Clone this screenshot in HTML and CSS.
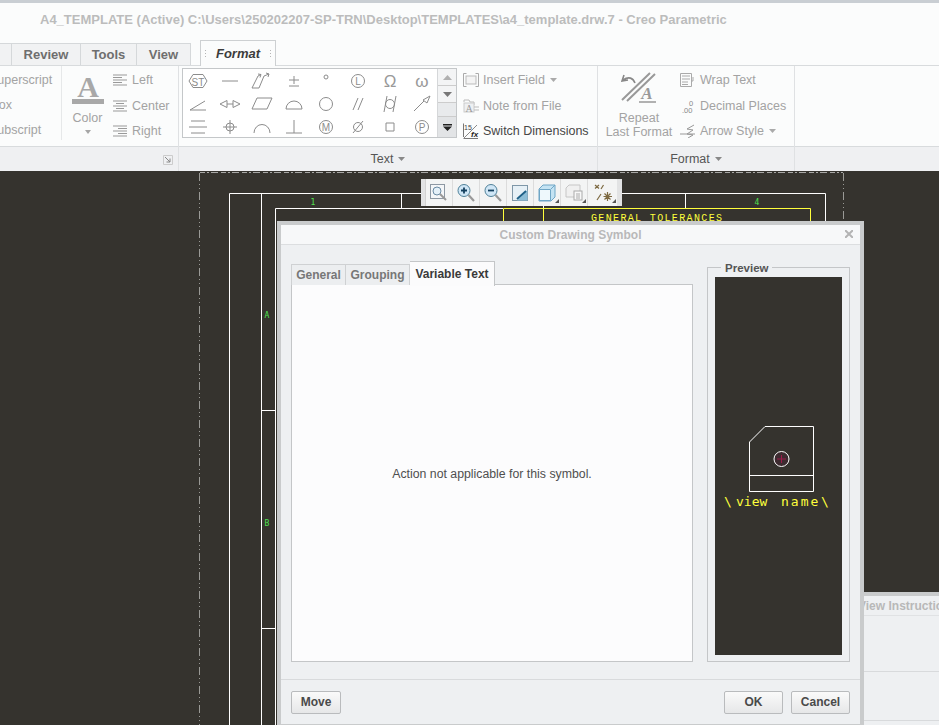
FILE: index.html
```html
<!DOCTYPE html>
<html>
<head>
    <title>Creo Parametric</title>
    <link rel="stylesheet" href="styles.css">
</head>
<body>
<div class="app">

    <div class="title_bar">A4_TEMPLATE (Active) C:\Users\250202207-SP-TRN\Desktop\TEMPLATES\a4_template.drw.7 - Creo Parametric</div>

    <div class="tab_row">
        <div class="tab tab_stub"></div>
        <div class="tab tab_review">Review</div>
        <div class="tab tab_tools">Tools</div>
        <div class="tab tab_view">View</div>
        <div class="tab_format"><span class="grip"></span>Format<span class="grip"></span></div>
    </div>

    <div class="ribbon">

        <section class="group group_style">
            <div class="group_body style_body">
                <div class="cut_col">
                    <div>Superscript</div>
                    <div class="cut_box">Text Box</div>
                    <div>Subscript</div>
                </div>
                <div class="color_col">
                    <svg width="32" height="30" viewBox="0 0 32 30"><text x="16" y="22" class="color_a">A</text><rect x="0" y="24" width="32" height="5" fill="#a8a8a8"/></svg>
                    <div class="color_label">Color</div>
                    <svg width="8" height="5" viewBox="0 0 8 5"><path d="M1 0H7L4 4Z" fill="#a6a6a6"/></svg>
                </div>
                <div class="align_col">
                    <div class="tool_row">
                        <svg width="15" height="12" viewBox="0 0 15 12"><path d="M0 1H14M0 3.500H9M0 6H14M0 8.500H9M0 11H14" stroke="#999" fill="none"/></svg>Left
                    </div>
                    <div class="tool_row">
                        <svg width="15" height="12" viewBox="0 0 15 12"><path d="M0 1H14M3 3.500H11M0 6H14M3 8.500H11M0 11H14" stroke="#999" fill="none"/></svg>Center
                    </div>
                    <div class="tool_row">
                        <svg width="15" height="12" viewBox="0 0 15 12"><path d="M0 1H14M5 3.500H14M0 6H14M5 8.500H14M0 11H14" stroke="#999" fill="none"/></svg>Right
                    </div>
                </div>
            </div>
            <div class="group_label"><svg class="launcher" width="10" height="10" viewBox="0 0 10 10"><path d="M.5 .5H9.500V9.500H.5Z" stroke="#ccc" fill="none"/><path d="M2 2L7 7M7 3.500V7H3.500" stroke="#888" fill="none"/></svg></div>
        </section>

        <section class="group group_text">
            <div class="group_body text_body">
                <div class="gallery">
                    <div class="symbol_grid">
                        <svg viewBox="0 0 24 20"><path d="M3 10L7 3.500H17L21 10L17 16.500H7Z"/><text x="12" y="14.500" class="sym_text">ST</text></svg>
                        <svg viewBox="0 0 24 20"><path d="M4 10H20"/></svg>
                        <svg viewBox="0 0 24 20"><path d="M2 17H9L14 5M2 17L8 5M8 5L11 3.500M8 3L11 3.500L10 6.500M14 5L19 3M16 2L19 3L18 6"/></svg>
                        <svg viewBox="0 0 24 20"><path d="M12 5V13M7 9H17M7 15H17"/></svg>
                        <svg viewBox="0 0 24 20"><circle cx="12" cy="6" r="2"/></svg>
                        <svg viewBox="0 0 24 20"><circle cx="12" cy="10" r="6.500"/><text x="12" y="14" class="sym_text">L</text></svg>
                        <svg viewBox="0 0 24 20"><text x="12" y="15.500" class="sym_big">Ω</text></svg>
                        <svg viewBox="0 0 24 20"><text x="12" y="15.500" class="sym_big">ω</text></svg>

                        <svg viewBox="0 0 24 20"><path d="M4 16H20M4 16L19 7"/></svg>
                        <svg viewBox="0 0 24 20"><path d="M2 10L9 6.500V13.500ZM22 10L15 6.500V13.500ZM9 10H15"/></svg>
                        <svg viewBox="0 0 24 20"><path d="M7 4H22L17 15H2Z"/></svg>
                        <svg viewBox="0 0 24 20"><path d="M4 15H20V15A8 8 0 0 0 4 15Z"/></svg>
                        <svg viewBox="0 0 24 20"><circle cx="12" cy="10" r="6.500"/></svg>
                        <svg viewBox="0 0 24 20"><path d="M7 16L12 4M12 16L17 4"/></svg>
                        <svg viewBox="0 0 24 20"><circle cx="12" cy="10" r="4.500"/><path d="M6 18L9 2M15 18L18 2"/></svg>
                        <svg viewBox="0 0 24 20"><path d="M4 17L14 7M13 6L20 2L17 9Z"/></svg>

                        <svg viewBox="0 0 24 20"><path d="M5 4H19M3 10H21M5 16H19"/></svg>
                        <svg viewBox="0 0 24 20"><circle cx="12" cy="10" r="4"/><path d="M12 3V17M5 10H19"/></svg>
                        <svg viewBox="0 0 24 20"><path d="M4 16A8 8.500 0 0 1 20 16"/></svg>
                        <svg viewBox="0 0 24 20"><path d="M12 3V16M4 16H20"/></svg>
                        <svg viewBox="0 0 24 20"><circle cx="12" cy="10" r="6.500"/><text x="12" y="14" class="sym_text">M</text></svg>
                        <svg viewBox="0 0 24 20"><circle cx="12" cy="10" r="4.500"/><path d="M7 16L17 4"/></svg>
                        <svg viewBox="0 0 24 20"><path d="M8 6H16V14H8Z"/></svg>
                        <svg viewBox="0 0 24 20"><circle cx="12" cy="10" r="6.500"/><text x="12" y="14" class="sym_text">P</text></svg>
                    </div>
                    <div class="gallery_scroll">
                        <div class="scroll_btn"><svg width="9" height="5" viewBox="0 0 9 5"><path d="M0 5H9L4.500 0Z" fill="#b0b0b0"/></svg></div>
                        <div class="scroll_btn"><svg width="9" height="5" viewBox="0 0 9 5"><path d="M0 0H9L4.500 5Z" fill="#777"/></svg></div>
                        <div class="scroll_gap"></div>
                        <div class="scroll_btn scroll_more"><svg width="9" height="7" viewBox="0 0 9 7"><path d="M0 0H9V1.500H0ZM0 2.500H9L4.500 7Z" fill="#222"/></svg></div>
                    </div>
                </div>
                <div class="insert_col">
                    <div class="tool_row">
                        <svg width="16" height="14" viewBox="0 0 16 14"><path d="M3.500 .5H.5V13.500H3.500M12.500 .5H15.500V13.500H12.500" stroke="#aaa" fill="none"/><rect x="3" y="3" width="10" height="8" fill="#f4f4f4" stroke="#bbb"/></svg>Insert Field<svg class="caret" width="7" height="4" viewBox="0 0 7 4"><path d="M0 0H7L3.500 4Z" fill="#aaa"/></svg>
                    </div>
                    <div class="tool_row">
                        <svg width="16" height="14" viewBox="0 0 16 14"><path d="M1 3V1H6L7 3H11V6" stroke="#bbb" fill="none"/><rect x="1" y="4" width="10" height="9" fill="#eef0f2" stroke="#ccc"/><text x="6" y="12.500" class="file_a">A</text><path d="M11 8H16M11 11H16" stroke="#bbb"/></svg>Note from File
                    </div>
                    <div class="tool_row tool_on">
                        <svg width="16" height="16" viewBox="0 0 16 16"><path d="M.5 .5V14M.5 15.500H15" stroke="#777" fill="none"/><text x="1" y="7" class="dim_num">15</text><path d="M1 15L14 2" stroke="#888"/><text x="8" y="14" class="dim_fx">fx</text></svg>Switch Dimensions
                    </div>
                </div>
            </div>
            <div class="group_label">Text<svg class="caret" width="7" height="4" viewBox="0 0 7 4"><path d="M0 0H7L3.500 4Z" fill="#888"/></svg></div>
        </section>

        <section class="group group_format">
            <div class="group_body format_body">
                <div class="repeat_col">
                    <svg width="36" height="32" viewBox="0 0 36 32"><path d="M1 28L29 1M6 29L34 2" stroke="#999" stroke-width="2" fill="none"/><path d="M3 3L1 9L7 8M2 8C8 4 12 6 14 11" stroke="#888" stroke-width="1.600" fill="none"/><text x="26" y="27" class="repeat_a">A</text><path d="M18 30H35" stroke="#999" stroke-width="1.500"/></svg>
                    <div>Repeat</div>
                    <div>Last Format</div>
                </div>
                <div class="wrap_col">
                    <div class="tool_row">
                        <svg width="16" height="14" viewBox="0 0 16 14"><path d="M.5 .5H11.500V13.500H.5ZM2 3H10M2 6H10M2 9H8M2 11.500H8M13 4V8H12" stroke="#aaa" fill="none"/></svg>Wrap Text
                    </div>
                    <div class="tool_row">
                        <svg width="16" height="16" viewBox="0 0 16 16"><text x="2" y="15" class="dec_num">.00</text><text x="9" y="7.500" class="dec_num">0</text></svg>Decimal Places
                    </div>
                    <div class="tool_row">
                        <svg width="16" height="14" viewBox="0 0 16 14"><path d="M0 10H15M14 1L7 5L13 6L7 10L13 11L8 14" stroke="#999" fill="none"/></svg>Arrow Style<svg class="caret" width="7" height="4" viewBox="0 0 7 4"><path d="M0 0H7L3.500 4Z" fill="#aaa"/></svg>
                    </div>
                </div>
            </div>
            <div class="group_label">Format<svg class="caret" width="7" height="4" viewBox="0 0 7 4"><path d="M0 0H7L3.500 4Z" fill="#888"/></svg></div>
        </section>

        <section class="group group_rest">
            <div class="group_body"></div>
            <div class="group_label"></div>
        </section>
    </div>

    <div class="canvas">
        <!-- Drawing sheet, page coordinates -->
        <svg class="sheet" width="939" height="554" viewBox="0 171 939 554">
            <path d="M200 172.500H843" stroke="#a8a8a6" stroke-dasharray="5 2 2 2 7 3"/>
            <path d="M199.500 173V725M843.500 173V725" stroke="#9a9a96" stroke-dasharray="8 3 1 3 1 3"/>
            <path d="M229.500 725V193.500H825.500V725M261.500 193.500V725M275.500 725V208.500H503M401.500 193.500V208M543.500 193.500V208M685.500 193.500V208M261 410.500H276M261 628.500H276" stroke="#fff" fill="none"/>
            <path d="M503.500 225V208.500H810.500V225M543.500 208V225" stroke="#ffff3c" fill="none"/>
            <text x="591" y="221" class="sheet_tol" textLength="131">GENERAL TOLERANCES</text>
            <text x="313" y="205" class="sheet_zone">1</text>
            <text x="757" y="205" class="sheet_zone">4</text>
            <text x="267" y="318" class="sheet_zone">A</text>
            <text x="267" y="526" class="sheet_zone">B</text>
        </svg>

        <div class="float_bar">
            <div class="float_grip"></div>
            <div class="float_btn"><svg width="18" height="18" viewBox="0 0 18 18"><rect x=".5" y=".5" width="14" height="14" fill="#f4f6f8" stroke="#8d98a3"/><circle cx="7" cy="7" r="4" fill="#e4f0f8" stroke="#6a8aa3"/><path d="M10 10L16 16" stroke="#999" stroke-width="2"/></svg></div>
            <div class="float_btn"><svg width="20" height="20" viewBox="0 0 20 20"><circle cx="8" cy="7.500" r="6" fill="#cfe6f6" stroke="#4f8199"/><path d="M5 7.500H11M8 4.500V10.500" stroke="#14405f" stroke-width="1.800"/><path d="M12.500 12L18 18" stroke="#999" stroke-width="2.200"/></svg></div>
            <div class="float_btn"><svg width="20" height="20" viewBox="0 0 20 20"><circle cx="8" cy="7.500" r="6" fill="#cfe6f6" stroke="#4f8199"/><path d="M5 7.500H11" stroke="#14405f" stroke-width="1.800"/><path d="M12.500 12L18 18" stroke="#999" stroke-width="2.200"/></svg></div>
            <div class="float_btn"><svg width="16" height="16" viewBox="0 0 16 16"><rect x=".5" y=".5" width="15" height="15" fill="#e6f0f6" stroke="#7f97a8"/><path d="M5 15.500L15.500 5V15.500Z" fill="#8dbdd6"/><path d="M5 14L14 6" stroke="#1e5f86" stroke-width="1.800"/></svg></div>
            <div class="float_btn has_corner"><svg width="18" height="18" viewBox="0 0 18 18"><path d="M1 5L5 1H17V13L13 17H1Z" fill="#c4e3f3" stroke="#6fa6c6"/><path d="M1.500 5.500H12.500V16.500H1.500Z" fill="#eef8fc" stroke="#6fa6c6"/><path d="M13 5L17 1" fill="none" stroke="#6fa6c6"/></svg></div>
            <div class="float_btn has_corner"><svg width="18" height="18" viewBox="0 0 18 18"><path d="M1 4L4 1H15V13H1Z" fill="#f0f0f0" stroke="#c6c6c6"/><rect x="9" y="7" width="8" height="9" fill="#f8f8f8" stroke="#aaa"/><path d="M11 10H15M11 12H15M11 14H15" stroke="#aaa"/></svg></div>
            <div class="float_btn float_last has_corner"><svg width="18" height="18" viewBox="0 0 18 18"><path d="M1 1L5 4.500M5 1L1 4.500M9.500 1L7 5M7 10L3 16M13.500 8V17M9.500 12.500H18M10.500 9.500L16.500 15.500M16.500 9.500L10.500 15.500" stroke="#7d6a42" stroke-width="1.200" fill="none"/></svg></div>
        </div>

        <!-- Window left behind the dialog -->
        <div class="back_window">
            <div class="back_title">View Instruction</div>
            <div class="back_row"></div>
            <div class="back_row back_row_low"></div>
        </div>

        <div class="dialog">
            <div class="dialog_title">Custom Drawing Symbol<svg class="dialog_close" width="8" height="8" viewBox="0 0 8 8"><path d="M0 0L8 8M8 0L0 8" stroke="#b4b4b4" stroke-width="2"/></svg></div>
            <div class="dialog_body">
                <div class="tab_col">
                    <div class="dialog_tabs">
                        <div class="dialog_tab tab_general">General</div>
                        <div class="dialog_tab tab_grouping">Grouping</div>
                        <div class="dialog_tab dialog_tab_on">Variable Text</div>
                    </div>
                    <div class="tab_panel">Action not applicable for this symbol.</div>
                </div>
                <div class="preview">
                    <div class="preview_legend">Preview</div>
                    <svg class="preview_view" width="127" height="378" viewBox="715 277 127 378">
                        <path d="M749.500 442L765 426.500H813.500V491.500H749.500ZM749.500 475.500H813.500" stroke="#fff" fill="none"/>
                        <circle cx="781.500" cy="459" r="7.500" stroke="#fff" fill="#3d2b30"/>
                        <path d="M777 459H786M781.500 455V463" stroke="#9c1a48"/>
                        <text y="506" class="preview_name"><tspan x="724">\</tspan><tspan x="736">view</tspan><tspan x="781" class="preview_wide">name</tspan><tspan x="821">\</tspan></text>
                    </svg>
                </div>
            </div>
            <div class="dialog_foot">
                <button class="dlg_btn btn_move">Move</button>
                <div class="foot_right">
                    <button class="dlg_btn btn_ok">OK</button>
                    <button class="dlg_btn btn_cancel">Cancel</button>
                </div>
            </div>
        </div>
    </div>
</div>
</body>
</html>
```

FILE: styles.css
```css
/*Page.*/
html, body {
    margin: 0;
    height: 100%;
    overflow: hidden;
}

.app {
    width: 939px;
    height: 725px;
    display: flex;
    flex-direction: column;
    overflow: hidden;
    font-family: "Liberation Sans", Arial, sans-serif;
    font-size: 12.5px;
    color: #a3a3a3;
    background-color: #fbfcfc;
}

/*Title and tabs.*/
.title_bar {
    height: 37px;
    line-height: 34px;
    padding-left: 40px;
    border-top: 3px solid #c9ced3;
    font-size: 13px;
    font-weight: bold;
    color: #bcbcbc;
    white-space: nowrap;
}

.tab_row {
    height: 25px;
    display: flex;
    align-items: flex-end;
}

.tab {
    height: 21px;
    line-height: 22px;
    text-align: center;
    font-size: 13px;
    font-weight: bold;
    color: #6e6e6e;
    background-color: #f1f2f3;
    border-top: 1px solid #d5d8da;
    border-right: 1px solid #d5d8da;
}

.tab_stub { width: 11px; }
.tab_review { width: 68px; }
.tab_tools { width: 55px; }
.tab_view { width: 53px; }

.tab_format {
    width: 76px;
    height: 26px;
    margin-left: 9px;
    margin-bottom: -1px;
    display: flex;
    align-items: center;
    justify-content: space-between;
    box-sizing: border-box;
    padding: 0 3px;
    position: relative;
    font-size: 13px;
    font-weight: bold;
    font-style: italic;
    color: #3c3c3c;
    background-color: #fbfcfc;
    border: 1px solid #cdd0d2;
    border-bottom: none;
}

.grip {
    width: 3px;
    height: 9px;
    background-image: radial-gradient(#b5b5b5 40%, transparent 45%);
    background-size: 3px 3px;
}

/*Ribbon groups.*/
.ribbon {
    height: 106px;
    display: flex;
    border-top: 1px solid #d8dbdd;
    box-sizing: border-box;
}

.group {
    display: flex;
    flex-direction: column;
    border-right: 1px solid #dfe1e3;
    box-sizing: border-box;
}

.group_style { width: 179px; }
.group_text { width: 419px; }
.group_format { width: 197px; }
.group_rest { flex: 1; border-right: none; }

.group_body {
    height: 80px;
    display: flex;
    box-sizing: border-box;
}

.group_label {
    flex: 1;
    display: flex;
    align-items: center;
    justify-content: center;
    position: relative;
    font-size: 12.5px;
    color: #555;
    background-color: #eff0f2;
    border-top: 1px solid #d8dbdd;
}

.launcher {
    position: absolute;
    right: 5px;
    top: 8px;
}

.caret {
    margin-left: 5px;
    flex: none;
}

.tool_row {
    height: 25px;
    display: flex;
    align-items: center;
    white-space: nowrap;
}

.tool_row:first-child {
    margin-top: -1px;
    margin-bottom: 1px;
}

.tool_on {
    color: #474747;
}

/*Style group.*/
.cut_col {
    width: 62px;
    flex: none;
    overflow: hidden;
    padding-top: 2px;
    border-right: 1px solid #e6e8e9;
    box-sizing: border-box;
    margin-bottom: 6px;
}

.cut_col div {
    height: 25px;
    line-height: 25px;
    margin-left: -11px;
    white-space: nowrap;
}

.cut_col .cut_box {
    margin-left: -36px;
}

.color_col {
    width: 51px;
    flex: none;
    display: flex;
    flex-direction: column;
    align-items: center;
    padding-top: 9px;
    box-sizing: border-box;
}

.color_a {
    font-family: "Liberation Serif", serif;
    font-size: 30px;
    font-weight: bold;
    fill: #a8a8a8;
    text-anchor: middle;
}

.color_label {
    margin: 6px 0 5px;
}

.align_col {
    padding-top: 2px;
}

.align_col svg {
    margin-right: 4px;
}

/*Symbol gallery.*/
.text_body {
    padding: 2px 0 0 3px;
}

.gallery {
    width: 275px;
    height: 70px;
    flex: none;
    display: flex;
    box-sizing: border-box;
    border: 1px solid #c4c7c9;
    background-color: #fff;
}

.symbol_grid {
    width: 255px;
    margin-left: -1px;
    display: grid;
    grid-template-columns: repeat(8, 32px);
    grid-template-rows: repeat(3, 23px);
    place-items: center;
}

.symbol_grid svg {
    width: 24px;
    height: 20px;
    fill: none;
    stroke: #8c8c8c;
}

.sym_text {
    font-size: 10px;
    fill: #8c8c8c;
    stroke: none;
    text-anchor: middle;
}

.sym_big {
    font-size: 17px;
    fill: #999;
    stroke: none;
    text-anchor: middle;
}

.gallery_scroll {
    width: 19px;
    display: flex;
    flex-direction: column;
    background-color: #e8eaec;
    border-left: 1px solid #d5d7d9;
    box-sizing: border-box;
}

.scroll_btn {
    height: 16px;
    display: flex;
    align-items: center;
    justify-content: center;
    border-bottom: 1px solid #ccc;
    background-color: #f3f4f5;
}

.scroll_gap {
    flex: 1;
}

.scroll_more {
    height: 20px;
    border-bottom: none;
    border-top: 1px solid #ccc;
    background-color: #e2e4e6;
}

.insert_col {
    margin-left: 6px;
}

.insert_col svg:first-child {
    margin-right: 4px;
    flex: none;
}

.file_a {
    font-family: "Liberation Serif", serif;
    font-size: 10px;
    fill: #999;
    text-anchor: middle;
}

.dim_num {
    font-size: 7px;
    fill: #444;
}

.dim_fx {
    font-size: 8px;
    font-style: italic;
    font-weight: bold;
    fill: #222;
}

/*Format group.*/
.repeat_col {
    width: 82px;
    flex: none;
    padding-top: 6px;
    text-align: center;
    line-height: 14px;
    white-space: nowrap;
}

.repeat_col svg {
    display: block;
    margin: 0 auto 7px;
}

.repeat_a {
    font-family: "Liberation Serif", serif;
    font-size: 17px;
    font-weight: bold;
    font-style: italic;
    fill: #999;
    text-anchor: middle;
}

.wrap_col {
    padding-top: 2px;
}

.wrap_col svg:first-child {
    margin-right: 4px;
    flex: none;
}

.dec_num {
    font-size: 7.500px;
    fill: #888;
}

/*Drawing canvas.*/
.canvas {
    flex: 1;
    position: relative;
    overflow: hidden;
    background-color: #35332e;
}

.sheet {
    position: absolute;
    left: 0;
    top: 0;
}

.sheet_tol {
    font-family: "Liberation Mono", monospace;
    font-size: 10px;
    fill: #ffff3c;
}

.sheet_zone {
    font-family: "DejaVu Sans Mono", monospace;
    font-size: 8px;
    fill: #4fe04f;
    text-anchor: middle;
}

/*Floating view toolbar.*/
.float_bar {
    position: absolute;
    left: 421px;
    top: 8px;
    height: 27px;
    display: flex;
    background-color: #f3f4f4;
}

.float_grip {
    width: 5px;
    box-sizing: border-box;
    background-color: #e2e3e4;
    border-right: 1px solid #d2d2d2;
}

.float_btn {
    width: 27px;
    box-sizing: border-box;
    display: flex;
    align-items: center;
    justify-content: center;
    position: relative;
    border-right: 1px solid #dcdcdc;
}

.float_last {
    width: 34px;
    border-right: 5px solid #e2e3e4;
}

.has_corner::after {
    content: "";
    position: absolute;
    right: 1px;
    bottom: 3px;
    border-left: 4px solid transparent;
    border-bottom: 4px solid #555;
}

/*Window behind the dialog.*/
.back_window {
    position: absolute;
    left: 858px;
    top: 421px;
    width: 81px;
    height: 133px;
    background-color: #eef0f2;
    border-top: 4px solid #c9cbcc;
    box-sizing: border-box;
}

.back_title {
    height: 19px;
    line-height: 21px;
    font-size: 12px;
    font-weight: bold;
    color: #b8b8b8;
    white-space: nowrap;
    border-bottom: 1px solid #e0e2e4;
}

.back_row {
    height: 55px;
    border-bottom: 1px solid #d8dadc;
}

.back_row_low {
    height: 48px;
}

/*Dialog.*/
.dialog {
    position: absolute;
    left: 277px;
    top: 50px;
    width: 587px;
    height: 504px;
    box-sizing: border-box;
    display: flex;
    flex-direction: column;
    background-color: #eef0f2;
    border: 4px solid #c9cbcc;
    border-bottom-width: 1px;
}

.dialog_title {
    height: 20px;
    line-height: 20px;
    flex: none;
    box-sizing: border-box;
    position: relative;
    text-align: center;
    font-size: 12px;
    font-weight: bold;
    color: #b9b9b9;
    background-color: #f7f8f9;
    border-bottom: 1px solid #dcdee0;
}

.dialog_close {
    position: absolute;
    right: 7px;
    top: 5px;
}

.dialog_body {
    flex: 1;
    display: flex;
    justify-content: space-between;
    padding: 16px 10px 17px;
    border-bottom: 1px solid #d8dadc;
}

.tab_col {
    width: 402px;
    display: flex;
    flex-direction: column;
}

.dialog_tabs {
    height: 24px;
    flex: none;
    display: flex;
    align-items: flex-end;
    margin-bottom: -1px;
    position: relative;
}

.dialog_tab {
    height: 21px;
    line-height: 21px;
    text-align: center;
    box-sizing: border-box;
    font-size: 12px;
    font-weight: bold;
    color: #777;
    background-color: #eceef0;
    border: 1px solid #cfd1d3;
    border-left: none;
    border-bottom: none;
}

.tab_general {
    width: 55px;
    border-left: 1px solid #cfd1d3;
}

.tab_grouping {
    width: 64px;
}

.dialog_tab_on {
    width: 85px;
    height: 25px;
    line-height: 24px;
    margin-bottom: -1px;
    color: #3a3a3a;
    background-color: #fbfbfc;
    border-top-color: #c4c6c8;
    border-right-color: #c4c6c8;
}

.tab_panel {
    flex: 1;
    display: flex;
    align-items: center;
    justify-content: center;
    padding-top: 1px;
    font-size: 12.300px;
    color: #4f4f4f;
    background-color: #fcfcfd;
    border: 1px solid #c4c6c8;
}

.preview {
    width: 143px;
    margin-top: 6px;
    position: relative;
    box-sizing: border-box;
    padding: 9px 7px 6px;
    border: 1px solid #c4c6c8;
}

.preview_legend {
    position: absolute;
    left: 13px;
    top: -6px;
    padding: 0 4px;
    font-size: 11.500px;
    font-weight: bold;
    color: #555;
    background-color: #eef0f2;
}

.preview_view {
    display: block;
    background-color: #35332e;
}

.preview_name {
    font-family: "DejaVu Sans Mono", monospace;
    font-size: 13px;
    fill: #ffff3c;
}

.preview_wide {
    letter-spacing: 2px;
}

.dialog_foot {
    height: 44px;
    flex: none;
    display: flex;
    align-items: center;
    justify-content: space-between;
    padding: 0 10px;
    box-sizing: border-box;
}

.foot_right {
    display: flex;
    gap: 8px;
}

.dlg_btn {
    height: 23px;
    padding: 0;
    font-family: "Liberation Sans", Arial, sans-serif;
    font-size: 12px;
    font-weight: bold;
    color: #4a4a4a;
    background: linear-gradient(#fafafa, #e6e7e8);
    border: 1px solid #b9bbbd;
    border-radius: 2px;
}

.btn_move { width: 50px; }
.btn_ok { width: 59px; }
.btn_cancel { width: 59px; }
```
